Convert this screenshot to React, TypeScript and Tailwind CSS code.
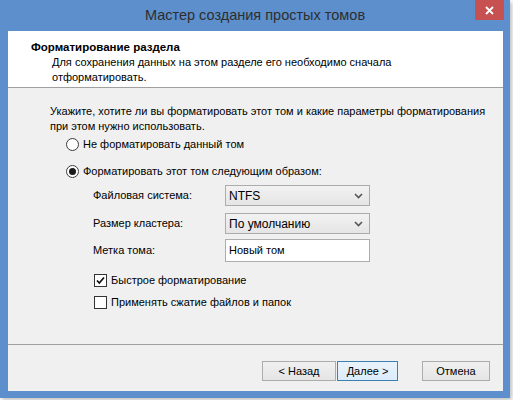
import React from "react";

const font = { fontFamily: '"Liberation Sans", Arial, sans-serif' };

function Radio({ checked, label }: { checked?: boolean; label: string }) {
  return (
    <div className="flex h-[16px] items-center gap-[4px]">
      <span className="flex h-[13px] w-[13px] items-center justify-center rounded-full border border-[#3c3c3c] bg-white">
        {checked ? <span className="h-[7px] w-[7px] rounded-full bg-[#1a1a1a]" /> : null}
      </span>
      <span>{label}</span>
    </div>
  );
}

function Check({ checked, label }: { checked?: boolean; label: string }) {
  return (
    <div className="flex h-[16px] items-center gap-[4px]">
      <span className="flex h-[13px] w-[13px] items-center justify-center border border-[#333] bg-white">
        {checked ? (
          <svg width="11" height="11" viewBox="0 0 11 11">
            <path d="M2 5.5 L4.3 8 L9 2.5" fill="none" stroke="#111" strokeWidth="1.8" />
          </svg>
        ) : null}
      </span>
      <span>{label}</span>
    </div>
  );
}

function Select({ value }: { value: string }) {
  return (
    <div className="flex h-[21px] w-[145px] items-center justify-between border border-[#acacac] bg-gradient-to-b from-[#f2f2f2] to-[#e5e5e5] pl-[3px] pr-[6px]">
      <span className="text-[12px]">{value}</span>
      <svg width="9" height="6" viewBox="0 0 9 6">
        <path d="M1 1 L4.5 4.5 L8 1" fill="none" stroke="#555" strokeWidth="1.6" />
      </svg>
    </div>
  );
}

function Button({ label, focused }: { label: string; focused?: boolean }) {
  return (
    <div
      className={
        "flex h-[20px] items-center justify-center border bg-gradient-to-b " +
        (focused ? "border-[#3c7fb1] from-[#eaf3fb] to-[#dcecfc]" : "border-[#acacac] from-[#f0f0f0] to-[#e5e5e5]")
      }
    >
      {label}
    </div>
  );
}

export default function App() {
  return (
    <div className="h-[400px] w-[513px] whitespace-nowrap bg-white text-[11px] text-black" style={font}>
      <div className="flex h-[398px] w-[510px] flex-col bg-[#5d8fcd] shadow-[2px_2px_4px_rgba(0,0,0,0.25)]">
        <div className="relative flex h-[31px] shrink-0 items-center justify-center">
          <span className="text-[14.5px] text-[#2e2e2e]">Мастер создания простых томов</span>
          <div className="absolute right-[6px] top-0 flex h-[20px] w-[29px] items-center justify-center bg-[#c75050]">
            <svg width="9" height="9" viewBox="0 0 9 9">
              <path d="M1 1 L8 8 M8 1 L1 8" stroke="white" strokeWidth="1.8" />
            </svg>
          </div>
        </div>
        <div className="ml-[8px] mr-[7px] flex flex-1 flex-col bg-[#f0f0f0]">
          <div className="h-[57px] border-b border-[#a0a0a0] bg-white pl-[23px] pt-[9px]">
            <div className="text-[11.5px] font-bold leading-[15px]">Форматирование раздела</div>
            <div className="pl-[21px] leading-[15px]">
              Для сохранения данных на этом разделе его необходимо сначала
              <br />
              отформатировать.
            </div>
          </div>
          <div className="flex h-[257px] flex-col border-b border-[#a0a0a0] pl-[42px] pt-[16px]">
            <div className="leading-[15px]">
              Укажите, хотите ли вы форматировать этот том и какие параметры форматирования
              <br />
              при этом нужно использовать.
            </div>
            <div className="mt-[2px] flex flex-col gap-[11px] pl-[16px]">
              <Radio label="Не форматировать данный том" />
              <Radio checked label="Форматировать этот том следующим образом:" />
            </div>
            <div className="mt-[6px] flex flex-col pl-[43px]">
              <div className="flex items-center">
                <div className="w-[132px]">Файловая система:</div>
                <Select value="NTFS" />
              </div>
              <div className="mt-[7px] flex items-center">
                <div className="w-[132px]">Размер кластера:</div>
                <Select value="По умолчанию" />
              </div>
              <div className="mt-[5px] flex items-center">
                <div className="w-[132px]">Метка тома:</div>
                <div className="flex h-[23px] w-[145px] items-center border border-[#acacac] bg-white pl-[3px]">
                  Новый том
                </div>
              </div>
            </div>
            <div className="mt-[10px] flex flex-col gap-[6px] pl-[44px]">
              <Check checked label="Быстрое форматирование" />
              <Check label="Применять сжатие файлов и папок" />
            </div>
          </div>
          <div className="flex flex-1 items-start pl-[254px] pt-[16px]">
            <div className="w-[74px]">
              <Button label="< Назад" />
            </div>
            <div className="ml-[1px] w-[61px]">
              <Button focused label="Далее >" />
            </div>
            <div className="ml-[24px] w-[68px]">
              <Button label="Отмена" />
            </div>
          </div>
        </div>
        <div className="h-[7px] shrink-0" />
      </div>
    </div>
  );
}
